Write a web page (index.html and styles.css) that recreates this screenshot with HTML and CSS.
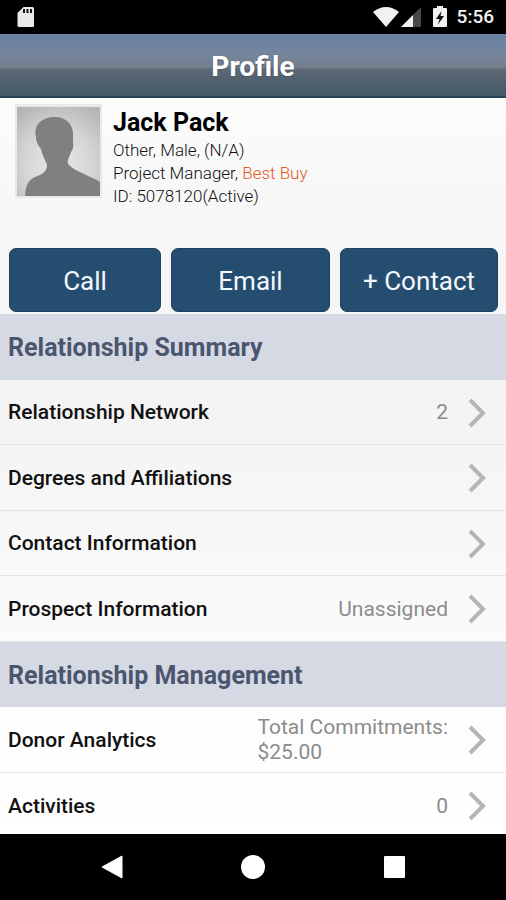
FILE: index.html
```html
<!DOCTYPE html>
<html lang="en">
<head>
<meta charset="utf-8">
<meta name="viewport" content="width=device-width, initial-scale=1">
<title>Profile</title>
<link rel="stylesheet" href="styles.css">
</head>
<body>
<div class="status-bar">
  <svg class="status-card" width="18" height="22" viewBox="0 0 18 22" aria-hidden="true">
    <path fill="#e8e8e8" d="M6.500 1H15.500Q17 1 17 2.500V19.500Q17 21 15.500 21H2Q.5 21 .5 19.500V7Z"/>
    <path fill="#111" d="M6 3h2v4H6zM9.500 3h2v4h-2zM13 3h2v4h-2z"/>
  </svg>
  <svg class="status-wifi" width="26" height="20" viewBox="0 0 26 20" aria-hidden="true">
    <path fill="#f1f1f1" d="M0 5Q13-5 26 5L13 20Z"/>
  </svg>
  <svg class="status-signal" width="20" height="20" viewBox="0 0 20 20" aria-hidden="true">
    <path fill="#484848" d="M20 0V20H0Z"/>
    <path fill="#f1f1f1" d="M12 8V20H0Z"/>
  </svg>
  <svg class="status-battery" width="14" height="22" viewBox="0 0 14 22" aria-hidden="true">
    <path fill="#f1f1f1" d="M4 0h6v2h3q1 0 1 1v17q0 1-1 1H1q-1 0-1-1V3q0-1 1-1h3z"/>
    <path fill="#111" d="M8.500 5L3 13h3.500L5 18.500 11 10H7.500Z"/>
  </svg>
  <span class="status-time">5:56</span>
</div>

<header class="title-bar"><h1 class="title">Profile</h1></header>

<main class="content">
  <section class="profile">
    <div class="person">
      <svg class="avatar" width="90" height="94" viewBox="0 0 90 94" role="img" aria-label="Photo of Jack Pack">
        <defs>
          <radialGradient id="photo" cx=".5" cy=".65" r=".75">
            <stop offset="0" stop-color="#e9e9e9"/>
            <stop offset=".55" stop-color="#d5d5d5"/>
            <stop offset="1" stop-color="#b5b5b5"/>
          </radialGradient>
        </defs>
        <path fill="#e9e9e9" d="M1 0h87v94H1z"/>
        <path fill="url(#photo)" d="M3 3h83v89H3z"/>
        <path fill="#808080" d="M11 92C12 81 14 76 21 73C29 70 33 67 33 61C31 55 28 51 27 45C24 41 22 38 22 33C19 20 29 13 41 13C53 13 60 21 59 33V39C60 40 59 46 57 48C55 54 52 58 55 61C62 68 75 71 86 78V92Z"/>
      </svg>
      <div class="details">
        <h2 class="name">Jack Pack</h2>
        <p class="detail">Other, Male, (N/A)</p>
        <p class="detail">Project Manager, <a class="company" href="#">Best Buy</a></p>
        <p class="detail">ID: 5078120(Active)</p>
      </div>
    </div>
    <div class="actions">
      <button class="action" type="button">Call</button>
      <button class="action" type="button">Email</button>
      <button class="action" type="button">+ Contact</button>
    </div>
  </section>

  <div class="list">
    <h2 class="section">Relationship Summary</h2>
    <a class="row" href="#"><span class="label">Relationship Network</span><span class="value">2</span><svg class="chevron" width="18" height="30" viewBox="0 0 18 30" aria-hidden="true"><path d="M2 2L15 15 2 28"/></svg></a>
    <a class="row" href="#"><span class="label">Degrees and Affiliations</span><svg class="chevron" width="18" height="30" viewBox="0 0 18 30" aria-hidden="true"><path d="M2 2L15 15 2 28"/></svg></a>
    <a class="row" href="#"><span class="label">Contact Information</span><svg class="chevron" width="18" height="30" viewBox="0 0 18 30" aria-hidden="true"><path d="M2 2L15 15 2 28"/></svg></a>
    <a class="row" href="#"><span class="label">Prospect Information</span><span class="value">Unassigned</span><svg class="chevron" width="18" height="30" viewBox="0 0 18 30" aria-hidden="true"><path d="M2 2L15 15 2 28"/></svg></a>
    <h2 class="section">Relationship Management</h2>
    <a class="row" href="#"><span class="label">Donor Analytics</span><span class="value">Total Commitments:<br>$25.00</span><svg class="chevron" width="18" height="30" viewBox="0 0 18 30" aria-hidden="true"><path d="M2 2L15 15 2 28"/></svg></a>
    <a class="row row-last" href="#"><span class="label">Activities</span><span class="value">0</span><svg class="chevron" width="18" height="30" viewBox="0 0 18 30" aria-hidden="true"><path d="M2 2L15 15 2 28"/></svg></a>
  </div>
</main>

<nav class="nav-bar">
  <button class="nav-button" type="button" aria-label="Back"><svg width="24" height="24" viewBox="0 0 24 24"><path d="M23 1V23L3 12Z" stroke-width="1" stroke="#fff" stroke-linejoin="round"/></svg></button>
  <button class="nav-button" type="button" aria-label="Home"><svg width="24" height="24" viewBox="0 0 24 24"><circle cx="12" cy="12" r="12"/></svg></button>
  <button class="nav-button" type="button" aria-label="Overview"><svg width="24" height="24" viewBox="0 0 24 24"><rect x="1" y="1" width="21" height="22" rx="1"/></svg></button>
</nav>
</body>
</html>
```
FILE: styles.css
```css
* {
  box-sizing: border-box;
}

body {
  margin: 0;
  min-height: 100vh;
  display: flex;
  flex-direction: column;
  font-family: Roboto, "Liberation Sans", sans-serif;
  color: #111;
  background: #fff;
}

h1, h2, p {
  margin: 0;
}

a {
  color: inherit;
  text-decoration: none;
}

svg {
  display: block;
  flex: none;
}

.status-bar {
  display: flex;
  align-items: center;
  height: 34px;
  padding: 0 12px 0 17px;
  background: #000;
}

.status-card {
  margin-right: auto;
}

.status-signal {
  margin: 0 12px 0 2px;
}

.status-time {
  margin-left: 10px;
  color: #f1f1f1;
  font-size: 19px;
  font-weight: 500;
  line-height: 36px;
}

.title-bar {
  height: 64px;
  border-bottom: 2px solid #294656;
  background: linear-gradient(#6983a3 0%, #75859a 35%, #747e8b 55%, #5e6a76 56%, #515f6d 78%, #425c69 100%);
}

.title {
  color: #fff;
  font-size: 28px;
  font-weight: 700;
  line-height: 66px;
  text-align: center;
  text-shadow: 0 1px 2px #45566b;
}

.content {
  flex: 1;
  display: flex;
  flex-direction: column;
  background: linear-gradient(#fcfcfd 0%, #f3f3f4 30%, #f4f4f4 45%, #fdfdfd 85%, #fff 100%);
}

.profile {
  padding: 6px 8px 2px 9px;
  background:
    linear-gradient(#fcfcfd, rgba(252, 252, 253, 0) 60%),
    repeating-conic-gradient(#f8f8f8 0% 25%, #f3f3f3 0% 50%) 0 0 / 4px 4px;
}

.person {
  display: flex;
  gap: 9px;
  min-height: 144px;
  padding-left: 5px;
}

.name {
  padding-top: 2px;
  font-size: 25px;
  font-weight: 700;
  line-height: 33px;
  color: #000;
}

.detail {
  font-size: 17px;
  font-weight: 300;
  line-height: 23px;
  color: #111;
}

.company {
  color: #e5591a;
}

.actions {
  display: grid;
  grid-template-columns: 152fr 159fr 158fr;
  gap: 10px;
}

.action {
  height: 64px;
  padding: 2px 0 0;
  border: 1px solid #1b4263;
  border-radius: 7px;
  background: #254d70;
  color: #f4f8fc;
  font: 400 26px/32px Roboto, "Liberation Sans", sans-serif;
}

.list {
  flex: 1;
  display: flex;
  flex-direction: column;
}

.section {
  flex: 1 0 65px;
  display: flex;
  align-items: center;
  padding: 2px 8px 0;
  background: #d5d9e4;
  color: #4b566e;
  font-size: 25px;
  font-weight: 700;
}

.row {
  flex: 1 0 65px;
  display: flex;
  align-items: center;
  padding: 2px 20px 0 8px;
  border-bottom: 1px solid #e4e4e4;
}

.row-last {
  flex-basis: 61px;
  padding-top: 6px;
  border-bottom: 0;
}

.label {
  margin-right: auto;
  font-size: 21px;
  font-weight: 500;
  line-height: 25px;
}

.value {
  margin-right: 2px;
  color: #8c8c8c;
  font-size: 21px;
  line-height: 25px;
}

.chevron {
  margin-left: 18px;
  fill: none;
  stroke: #b5b5b5;
  stroke-width: 4;
}

.nav-bar {
  display: flex;
  justify-content: center;
  height: 66px;
  background: #000;
}

.nav-button {
  display: flex;
  align-items: center;
  justify-content: center;
  width: 28%;
  padding: 0;
  border: 0;
  background: none;
}

.nav-button svg {
  fill: #fff;
}
```
